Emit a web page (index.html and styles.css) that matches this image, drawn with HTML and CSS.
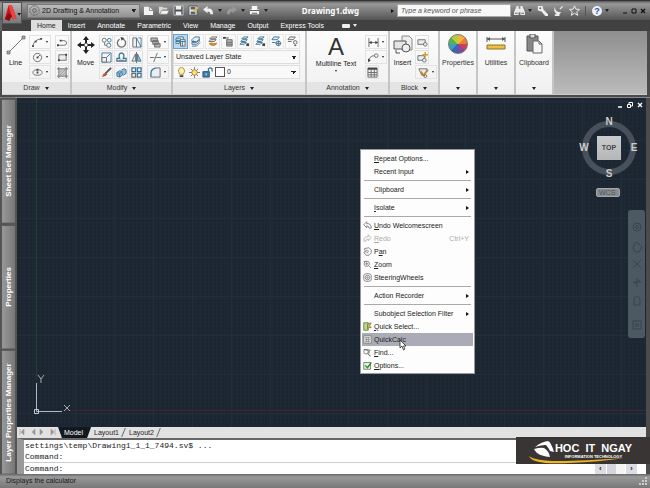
FILE: index.html
```html
<!DOCTYPE html>
<html lang="en">
<head>
<meta charset="utf-8">
<title>Drawing1.dwg</title>
<link rel="stylesheet" href="styles.css">
</head>
<body>
<svg class="sprite" aria-hidden="true">
  <defs>
    <symbol id="arc" viewBox="0 0 12 12"><path d="M1 10Q2 3 10 2" class="s"/><path d="M0 9h2v2H0zM9 1h2v2H9zM3 4h2v2H3z" class="k"/></symbol>
    <symbol id="circle" viewBox="0 0 12 12"><circle cx="6" cy="6" r="4.5" class="s"/><path d="M6 6l3-3" class="s"/><path d="M5 5h2v2H5z" class="k"/></symbol>
    <symbol id="ellipse" viewBox="0 0 12 12"><ellipse cx="6" cy="6" rx="5" ry="3" class="s"/><path d="M5 5h2v2H5zM5 2h2v2H5z" class="k"/></symbol>
    <symbol id="pline" viewBox="0 0 12 12"><path d="M1 9h6.500a3 2.500 0 0 0 0-5H4" class="s"/><path d="M0 8h2v2H0zM3 3h2v2H3z" class="k"/></symbol>
    <symbol id="rect" viewBox="0 0 12 12"><path d="M2 3h8v6H2z" class="s f"/><path d="M1 8h2v2H1zM9 2h2v2H9z" class="k"/></symbol>
    <symbol id="hatch" viewBox="0 0 12 12"><path d="M2 2h8v8H2z" fill="#ccc"/><path d="M2 0v12M10 0v12M0 2h12M0 10h12" class="s"/><path d="M3 9l6-6M3 6l3-3M6 9l3-3" stroke="#999"/></symbol>
    <symbol id="copy" viewBox="0 0 12 12"><circle cx="3.500" cy="3.500" r="2.200" class="s"/><circle cx="9" cy="3.500" r="2" class="b"/><circle cx="8.500" cy="9" r="2.300" class="b"/><path d="M4 6v3h2" class="s"/></symbol>
    <symbol id="rotate" viewBox="0 0 12 12"><path d="M4 2.500A4.500 4.500 0 1 0 8 2.500L6 1" class="s w"/><path d="M5 0l4 1-3 3z" class="k"/></symbol>
    <symbol id="stretch" viewBox="0 0 12 12"><path d="M2 1v10h4V1z" class="s f"/><path d="M6 1l5 10H6" class="b"/><path d="M8 1h3v10" class="b"/></symbol>
    <symbol id="scale" viewBox="0 0 12 12"><path d="M1 1h10v10H1z" class="b"/><path d="M1 6h5v5H1z" class="s f"/><path d="M6 6l4-4" class="b"/></symbol>
    <symbol id="offset" viewBox="0 0 12 12"><path d="M1 10V7h3q-2-5 2-6 4 1 2 6h3v3z" class="b w"/><path d="M3 9h6" class="s"/></symbol>
    <symbol id="mirror" viewBox="0 0 12 12"><path d="M5 2v8H1z" class="s f"/><path d="M7 2v8h4z" class="b bf"/><path d="M6 0v12" class="s"/></symbol>
    <symbol id="brush" viewBox="0 0 12 12"><path d="M11 1L5 7" stroke="#555" stroke-width="2"/><path d="M1 11q1-4 4-5l2 2q-2 3-6 3z" fill="#c3552d"/></symbol>
    <symbol id="explode" viewBox="0 0 12 12"><path d="M1 6l3-2 3 1v4l-3 2-3-1z" class="b bf"/><path d="M6 3l3-1 2 1v4l-3 2" class="b bf"/><path d="M1 6l3 1 3-2M4 7v4" class="b"/></symbol>
    <symbol id="array" viewBox="0 0 12 12"><path d="M1 1h4v4H1zM7 1h4v4H7zM7 7h4v4H7z" class="b w"/><path d="M1 7h4v4H1z" class="s w"/></symbol>
    <symbol id="erase" viewBox="0 0 12 12"><path d="M1 1h7v4H1zM3 4h6v4H3zM5 7h6v4H5z" class="s g"/></symbol>
    <symbol id="trim" viewBox="0 0 12 12"><path d="M0 6h5" class="s"/><path d="M7 6h5" class="b"/><path d="M8 1L4 11" class="s"/></symbol>
    <symbol id="fillet" viewBox="0 0 12 12"><path d="M1 11V7q0-5 6-6h4v10z" class="f"/><path d="M1 11V7q0-5 6-6" class="b w"/><path d="M7 1h4v10H1" class="s"/></symbol>
    <symbol id="layers" viewBox="0 0 12 12"><path d="M1 4l3-3h5v3L6 6H1zM1 7l2-2M1 7h5l3-3v2L6 9H1z" class="b f"/><path d="M1 11h5l4-4" class="b"/></symbol>
    <symbol id="layerprop" viewBox="0 0 12 12"><path d="M1 3l2-2h6v3M1 3h5v2H1zM1 6h4v2H1z" class="b f"/><path d="M6 4h5v7H6z" class="s f"/><path d="M6 6h5M8 6v5" class="b"/></symbol>
    <symbol id="layerhand" viewBox="0 0 12 12"><path d="M3 3l2-2h6L9 3zM2 6l2-2h6L8 6z" class="s f"/><path d="M2 8q3-2 5 0l4-1q0 3-4 4-4 0-5-3z" fill="#c98a3b"/></symbol>
    <symbol id="layerprev" viewBox="0 0 12 12"><path d="M4 4h6v7H4z" class="s g"/><path d="M1 2h5L4 4M4 7h6M4 9h6" class="s"/><path d="M0 1h3v2H0z" class="k"/></symbol>
    <symbol id="layertick" viewBox="0 0 12 12"><path d="M3 3l2-2h5L8 3zM2 6l2-2h5L7 6zM1 9l2-2h5L6 9z" class="b f"/><path d="M8 8h3v3H8z" class="k"/></symbol>
    <symbol id="layerfrz" viewBox="0 0 12 12"><path d="M1 4l2-3h6L7 4zM1 7h4" class="b f"/><circle cx="8" cy="8" r="2.500" class="b f"/><path d="M8 5v6M5 8h6" class="b"/></symbol>
    <symbol id="layeroff" viewBox="0 0 12 12"><path d="M1 4l2-3h6L7 4zM1 6h4" class="s f"/><circle cx="9" cy="7" r="2" class="s f"/><path d="M8 10h2v1H8z" class="k"/></symbol>
    <symbol id="bulb" viewBox="0 0 12 12"><path d="M4 8Q1 4 4 1q2-1 4 0 3 3 0 7z" fill="#fff09a" stroke="#a3935a"/><path d="M4 9h4v2H4z" class="k"/></symbol>
    <symbol id="sun" viewBox="0 0 12 12"><path d="M6 0v12M0 6h12M2 2l8 8M10 2l-8 8" stroke="#777"/><circle cx="6" cy="6" r="3" fill="#ffe372" stroke="#9a843e"/></symbol>
    <symbol id="lock" viewBox="0 0 12 12"><path d="M1 5h7v6H1z" fill="#3f7fab" stroke="#24587d"/><path d="M7 5V2q2-2 4 0v3" class="b w"/><path d="M4 7h1v2H4z" fill="#fff"/></symbol>
    <symbol id="dim" viewBox="0 0 12 12"><path d="M1 1v10M11 1v10M1 6h10" class="s"/><path d="M1 6l3-2v4zM11 6L8 4v4z" class="k"/></symbol>
    <symbol id="leader" viewBox="0 0 12 12"><path d="M1 11q0-7 6-7" class="s"/><circle cx="9" cy="4" r="2" class="s"/><path d="M0 11l0-4 3 2z" class="k"/></symbol>
    <symbol id="table" viewBox="0 0 12 12"><path d="M1 1h10v10H1z" class="s f"/><path d="M1 1h10v2H1z" class="k"/><path d="M1 6h10M1 8.500h10M4.500 3v8M8 3v8" class="s"/></symbol>
    <symbol id="blk1" viewBox="0 0 12 12"><path d="M1 3h8v5H1z" class="s f"/><circle cx="9" cy="8" r="2" class="s f"/></symbol>
    <symbol id="blk2" viewBox="0 0 12 12"><path d="M1 4h7v5H1z" class="s f"/><circle cx="8" cy="9" r="2" class="s f"/><path d="M9 0v6M6 3h6" stroke="#d99c27" stroke-width="1.500"/></symbol>
    <symbol id="blk3" viewBox="0 0 12 12"><path d="M1 2h9L7 9H4z" class="s f"/><path d="M3 5l3 4 5-6" stroke="#c08a28" stroke-width="2" fill="none"/><circle cx="8" cy="10" r="1.500" class="s"/></symbol>
    <symbol id="new" viewBox="0 0 12 12"><path d="M1 2h6l4 4v5H1z" fill="#f3f3f3"/><path d="M7 2v4h4" fill="none" stroke="#888"/></symbol>
    <symbol id="open" viewBox="0 0 12 12"><path d="M1 10V2h4l1 1h4v2H5z" fill="#d8d8d8"/><path d="M4 6h8l-2 4H2z" fill="#f4f4f4" stroke="#777" stroke-width=".5"/></symbol>
    <symbol id="save" viewBox="0 0 12 12"><path d="M1 1h10v10H1z" fill="#48535f" stroke="#c7c7c7"/><path d="M3 1h6v4H3zM3 7h6v4H3z" fill="#eee"/></symbol>
    <symbol id="saveas" viewBox="0 0 12 12"><path d="M1 1h9v10H1z" fill="#e5e5e5" stroke="#555"/><path d="M3 2h5v3H3zM3 7h5v3H3z" fill="#59626b"/><path d="M5 7l5-5 2 1-5 5z" fill="#e3b54f"/></symbol>
    <symbol id="undo" viewBox="0 0 12 12"><path d="M0 5l5-4v3q6-1 6 6H8q0-3-3-3v2z" fill="currentColor"/></symbol>
    <symbol id="back" viewBox="0 0 12 12"><path d="M1 5l4-4v2.500q6-.5 6 6H8q0-3-3-3V9z" fill="none" stroke="currentColor"/></symbol>
    <symbol id="print" viewBox="0 0 12 12"><path d="M3 1h6v4h2v5H1V5h2z" fill="#f5f5f5"/><path d="M1 6h10M3 9h6" stroke="#555"/></symbol>
    <symbol id="binoc" viewBox="0 0 12 12"><path d="M3 1h2v3h2V1h2l3 7v3H7V8H5v3H0V8z" fill="#ececec"/><path d="M1 9h3M8 9h3" stroke="#555"/></symbol>
    <symbol id="key" viewBox="0 0 12 12"><path d="M1 1h5l1 4 5 5v2H9L5 7 1 6z" fill="#eee"/><circle cx="3.500" cy="3.500" r="1" fill="#666"/></symbol>
    <symbol id="dish" viewBox="0 0 12 12"><path d="M2 2q0 6 7 6l-2 2v2H2v-2h2Q0 7 2 2zM7 4l3-3 1 1-3 3z" fill="#eee"/></symbol>
    <symbol id="star" viewBox="0 0 12 12"><path d="M6 1l1.500 3.500 4 .3-3 2.500 1 4L6 9l-3.500 2.300 1-4-3-2.500 4-.3z" fill="#777" stroke="#f3f3f3"/></symbol>
    <symbol id="gear" viewBox="0 0 12 12"><path d="M4 1h4l3 3v4l-3 3H4L1 8V4z" fill="none" stroke="#555" stroke-dasharray="2 1"/><circle cx="6" cy="6" r="2" fill="none" stroke="#555"/></symbol>
    <symbol id="pan" viewBox="0 0 12 12"><path d="M2 2l6-1 3 3v4l-3 3H4L1 7l2-1zM4 4l4 2M3 6l4 2" class="s"/></symbol>
    <symbol id="zoom" viewBox="0 0 12 12"><circle cx="5" cy="5" r="3.500" class="s"/><path d="M8 8l3 3M1 2h4M3 5h4M5 3v4" class="s"/></symbol>
    <symbol id="wheel" viewBox="0 0 12 12"><rect x="1" y="1" width="10" height="10" rx="3" class="s"/><circle cx="6" cy="6" r="3" class="s"/><circle cx="6" cy="6" r="1" class="s"/></symbol>
    <symbol id="qsel" viewBox="0 0 12 12"><path d="M1 1h6v10H1z" fill="#bcd98a" stroke="#4d6f35"/><path d="M6 3l5-2-2 4 2 3-3-1-2 2z" fill="#d8b648" stroke="#57503a" stroke-width=".7"/></symbol>
    <symbol id="calc" viewBox="0 0 12 12"><path d="M1 1h10v10H1z" fill="#e6e6e6" stroke="#777"/><path d="M3 3.500h6M3 6h6M3 8.500h6M4.500 3v7M7.500 3v7" stroke="#888"/></symbol>
    <symbol id="find" viewBox="0 0 12 12"><circle cx="4" cy="5" r="3" class="s"/><path d="M1 2l9 1M6 7l4 4M8 4v3" class="s w"/></symbol>
    <symbol id="opts" viewBox="0 0 12 12"><path d="M1 2h9v9H1z" fill="#e8f3e4" stroke="#49734a"/><path d="M3 6l3 3 5-7" fill="none" stroke="#2f8a36" stroke-width="1.800"/></symbol>
  </defs>
</svg>

<div class="app">
  <header class="titlebar">
    <button class="appmenu" aria-label="Application menu">
      <svg viewBox="0 0 20 22"><path d="M2 18L6 3q2-2 4 0l5 14-4 1-2-3-4 2z" fill="#c8161d"/><path d="M6 3q2-2 4 0l5 14-4 1z" fill="#ee4440"/><path d="M2 18l4-7 4 3-3 6z" fill="#8e0b12"/><path d="M16 11h4l-2 3z" fill="#111"/></svg>
    </button>
    <div class="workspace">
      <svg class="ic"><use href="#gear"/></svg>
      <select aria-label="Workspace"><option>2D Drafting &amp; Annotation</option></select>
    </div>
    <div class="quick">
      <button aria-label="New"><svg class="ic"><use href="#new"/></svg></button>
      <button aria-label="Open"><svg class="ic"><use href="#open"/></svg></button>
      <button aria-label="Save"><svg class="ic"><use href="#save"/></svg></button>
      <button aria-label="Save as"><svg class="ic"><use href="#saveas"/></svg></button>
      <button class="split" aria-label="Undo"><svg class="ic"><use href="#undo"/></svg><i class="caret"></i></button>
      <button class="split faded" aria-label="Redo"><svg class="ic flip"><use href="#undo"/></svg><i class="caret"></i></button>
      <button aria-label="Print"><svg class="ic"><use href="#print"/></svg></button>
      <button class="more" aria-label="Customize"><i class="caret"></i></button>
    </div>
    <h1>Drawing1.dwg</h1>
    <div class="search">
      <i class="play"></i>
      <input type="search" aria-label="Search" placeholder="Type a keyword or phrase">
    </div>
    <div class="help">
      <button class="split" aria-label="Find"><svg class="ic"><use href="#binoc"/></svg><i class="caret"></i></button>
      <button aria-label="Subscription"><svg class="ic"><use href="#key"/></svg></button>
      <button aria-label="Communication"><svg class="ic"><use href="#dish"/></svg></button>
      <button aria-label="Favorites"><svg class="ic"><use href="#star"/></svg></button>
      <button class="question" aria-label="Help"><b>?</b><i class="caret"></i></button>
    </div>
    <div class="window">
      <button aria-label="Minimize"><svg viewBox="0 0 6 6"><path d="M1 5h4" stroke="#111"/></svg></button>
      <button aria-label="Restore"><svg viewBox="0 0 6 6"><path d="M1 1h4v4H1z" fill="none" stroke="#111"/></svg></button>
      <button aria-label="Close"><svg viewBox="0 0 6 6"><path d="M1 1l4 4M5 1L1 5" stroke="#111" stroke-width="1.300"/></svg></button>
    </div>
  </header>

  <nav class="tabs">
    <a href="#" class="on">Home</a><a href="#">Insert</a><a href="#">Annotate</a><a href="#">Parametric</a><a href="#">View</a><a href="#">Manage</a><a href="#">Output</a><a href="#">Express Tools</a>
    <button aria-label="Minimize ribbon"><span></span><i class="caret"></i></button>
  </nav>

  <section class="ribbon">
    <div class="panel draw">
      <div class="tools">
        <button class="big"><svg viewBox="0 0 20 20"><path d="M2 18L18 2" stroke="#777"/><path d="M1 16h3v3H1zM16 1h3v3h-3z" fill="#aaa" stroke="#555" stroke-width=".6"/></svg>Line</button>
        <div class="grid two">
          <button class="split"><svg class="ic"><use href="#arc"/></svg><i class="caret"></i></button><button><svg class="ic"><use href="#pline"/></svg></button>
          <button class="split"><svg class="ic"><use href="#circle"/></svg><i class="caret"></i></button><button><svg class="ic"><use href="#rect"/></svg></button>
          <button class="split"><svg class="ic"><use href="#ellipse"/></svg><i class="caret"></i></button><button><svg class="ic"><use href="#hatch"/></svg></button>
        </div>
      </div>
      <h2>Draw <i class="caret"></i></h2>
    </div>
    <div class="panel modify">
      <div class="tools">
        <button class="big"><svg viewBox="0 0 20 20"><path d="M10 1l3 4h-2v3H9V5H7zM10 19l3-4h-2v-3H9v3H7zM1 10l4-3v2h3v2H5v2zM19 10l-4-3v2h-3v2h3v2z" fill="#222"/><path d="M8.500 8.500h3v3h-3z" fill="#fff" stroke="#777"/></svg>Move</button>
        <div class="grid four">
          <button><svg class="ic"><use href="#copy"/></svg></button><button><svg class="ic"><use href="#rotate"/></svg></button><button><svg class="ic"><use href="#stretch"/></svg></button><button class="split"><svg class="ic"><use href="#erase"/></svg><i class="caret"></i></button>
          <button><svg class="ic"><use href="#scale"/></svg></button><button><svg class="ic"><use href="#offset"/></svg></button><button><svg class="ic"><use href="#mirror"/></svg></button><button class="split"><svg class="ic"><use href="#trim"/></svg><i class="caret"></i></button>
          <button><svg class="ic"><use href="#brush"/></svg></button><button><svg class="ic"><use href="#explode"/></svg></button><button><svg class="ic"><use href="#array"/></svg></button><button class="split"><svg class="ic"><use href="#fillet"/></svg><i class="caret"></i></button>
        </div>
      </div>
      <h2>Modify <i class="caret"></i></h2>
    </div>
    <div class="panel layers">
      <div class="tools stack">
        <div class="row">
          <button class="active"><svg class="ic"><use href="#layerprop"/></svg></button><button><svg class="ic"><use href="#layers"/></svg></button>
          <button><svg class="ic"><use href="#layerhand"/></svg></button><button><svg class="ic"><use href="#layerprev"/></svg></button>
          <button><svg class="ic"><use href="#layertick"/></svg></button><button><svg class="ic"><use href="#layertick"/></svg></button>
          <button><svg class="ic"><use href="#layerfrz"/></svg></button><button><svg class="ic"><use href="#layeroff"/></svg></button>
        </div>
        <div class="combo"><select aria-label="Layer state"><option>Unsaved Layer State</option></select></div>
        <div class="combo">
          <svg class="ic"><use href="#bulb"/></svg><svg class="ic"><use href="#sun"/></svg><svg class="ic"><use href="#lock"/></svg><i class="swatch"></i>
          <select aria-label="Layer"><option>0</option></select>
        </div>
      </div>
      <h2>Layers <i class="caret"></i></h2>
    </div>
    <div class="panel annotation">
      <div class="tools">
        <button class="big text"><span class="glyph">A</span>Multiline Text<i class="caret"></i></button>
        <div class="grid">
          <button class="split"><svg class="ic"><use href="#dim"/></svg><i class="caret"></i></button>
          <button class="split"><svg class="ic"><use href="#leader"/></svg><i class="caret"></i></button>
          <button><svg class="ic"><use href="#table"/></svg></button>
        </div>
      </div>
      <h2>Annotation <i class="caret"></i></h2>
    </div>
    <div class="panel block">
      <div class="tools">
        <button class="big"><svg viewBox="0 0 20 20"><path d="M9 1h7l3 3v11H9z" fill="#eee" stroke="#888"/><path d="M1 6h12v8H1z" fill="#e4e4e4" stroke="#555"/><circle cx="13" cy="13" r="4" fill="#eee" stroke="#555"/><path d="M3 15v3h4" fill="none" stroke="#555"/></svg>Insert</button>
        <div class="grid">
          <button><svg class="ic"><use href="#blk1"/></svg></button>
          <button><svg class="ic"><use href="#blk2"/></svg></button>
          <button class="split"><svg class="ic"><use href="#blk3"/></svg><i class="caret"></i></button>
        </div>
      </div>
      <h2>Block <i class="caret"></i></h2>
    </div>
    <button class="panel tall">
      <i class="colorwheel"></i>Properties<i class="caret"></i>
    </button>
    <button class="panel tall">
      <svg viewBox="0 0 20 20"><path d="M1 5h18M1 3v5M19 3v5" stroke="#555"/><path d="M1 5l3-2v4zM19 5l-3-2v4z" fill="#555"/><path d="M1 11h18v4H1z" fill="#f0bd42" stroke="#8d742f"/></svg>Utilities<i class="caret"></i>
    </button>
    <button class="panel tall">
      <svg viewBox="0 0 20 20"><path d="M3 2h11v15H3z" fill="#888" stroke="#555"/><path d="M6 0h5v4H6z" fill="#ddd" stroke="#555"/><path d="M9 7h6l3 3v9H9z" fill="#f7f7f7" stroke="#666"/><path d="M15 7v3h3" fill="none" stroke="#666"/></svg>Clipboard<i class="caret"></i>
    </button>
  </section>

  <main class="work">
    <aside class="rail">
      <button>Sheet Set Manager</button>
      <button>Properties</button>
      <button>Layer Properties Manager</button>
    </aside>
    <div class="document">
      <div class="canvas">
        <div class="axis-x"></div><div class="axis-y"></div>
        <svg class="ucs" viewBox="0 0 40 42"><path d="M3.500 9v28.500H29" fill="none" stroke="#aeb9c3"/><path d="M1.500 35.500h4v4h-4z" fill="none" stroke="#c5ced6"/><path d="M5 1l3 4 3-4M8 5v4M31 31l6 6M37 31l-6 6" fill="none" stroke="#a0abb5"/></svg>
        <div class="docwin">
          <button aria-label="Minimize drawing"><svg viewBox="0 0 6 6"><path d="M1 5h4" stroke="#fff" stroke-width="1.500"/></svg></button>
          <button aria-label="Restore drawing"><svg viewBox="0 0 6 6"><path d="M.5 2.500h3v3h-3zM2 2V.5h3.500V4H4" fill="none" stroke="#fff"/></svg></button>
          <button aria-label="Close drawing"><svg viewBox="0 0 6 6"><path d="M1 1l4 4M5 1L1 5" stroke="#fff" stroke-width="1.300"/></svg></button>
        </div>
        <div class="cube">
          <span class="north">N</span><span class="west">W</span><button>TOP</button><span class="east">E</span><span class="south">S</span>
        </div>
        <button class="wcs">WCS</button>
        <div class="navbar">
          <svg viewBox="0 0 14 128"><g fill="none" stroke="#38444d"><circle cx="7" cy="17" r="4"/><circle cx="7" cy="17" r="1.500"/><path d="M3 38q1-5 3-6l3 2 3 3-3 5H5zM3 50l8 8M11 50l-8 8M3 72h8M7 68v9M4 74l6-4M4 89q3-6 6 0v6H4zM3 111h8v8H3zM6 113l3 2-3 2z"/></g></svg>
        </div>

        <div class="menu" role="menu">
          <button role="menuitem"><span><u>R</u>epeat Options...</span></button>
          <button role="menuitem"><span>Recent Input</span><i class="play"></i></button>
          <hr>
          <button role="menuitem"><span>Clipboard</span><i class="play"></i></button>
          <hr>
          <button role="menuitem"><span><u>I</u>solate</span><i class="play"></i></button>
          <hr>
          <button role="menuitem"><svg class="ic"><use href="#back"/></svg><span><u>U</u>ndo Welcomescreen</span></button>
          <button role="menuitem" disabled><svg class="ic flip"><use href="#back"/></svg><span><u>R</u>edo</span><kbd>Ctrl+Y</kbd></button>
          <button role="menuitem"><svg class="ic"><use href="#pan"/></svg><span>P<u>a</u>n</span></button>
          <button role="menuitem"><svg class="ic"><use href="#zoom"/></svg><span><u>Z</u>oom</span></button>
          <button role="menuitem"><svg class="ic"><use href="#wheel"/></svg><span>SteeringWheels</span></button>
          <hr>
          <button role="menuitem"><span>Action Recorder</span><i class="play"></i></button>
          <hr>
          <button role="menuitem"><span>Subobject Selection Filter</span><i class="play"></i></button>
          <button role="menuitem"><svg class="ic"><use href="#qsel"/></svg><span><u>Q</u>uick Select...</span></button>
          <button role="menuitem" class="hot"><svg class="ic"><use href="#calc"/></svg><span>QuickCalc</span></button>
          <button role="menuitem"><svg class="ic"><use href="#find"/></svg><span><u>F</u>ind...</span></button>
          <button role="menuitem"><svg class="ic"><use href="#opts"/></svg><span><u>O</u>ptions...</span></button>
          <svg class="pointer" viewBox="0 0 8 12"><path d="M1 1v8l2-2 1.500 4 1.500-1-1.500-3H7z" fill="#fff" stroke="#222" stroke-width=".8"/></svg>
        </div>
      </div>

      <div class="sheets">
        <svg class="pager" viewBox="0 0 40 8"><path d="M7 1L4 4l3 3zM3 1v6M18 1l-3 3 3 3zM23 1l3 3-3 3zM34 1l3 3-3 3zM38 1v6" fill="#999" stroke="#999" stroke-width=".6"/></svg>
        <a href="#" class="on">Model</a><a href="#">Layout1</a><a href="#">Layout2</a>
      </div>

      <div class="command">
        <div class="log">settings\temp\Drawing1_1_1_7494.sv$ ...<br>Command:</div>
        <div class="prompt">
          <label for="cmd">Command:</label><input id="cmd" type="text">
          <div class="scroll"><button aria-label="Scroll left">‹</button><i></i><button aria-label="Scroll right">›</button></div>
        </div>
      </div>
    </div>
  </main>

  <footer class="status">Displays the calculator
    <svg viewBox="0 0 8 8"><path d="M6 0h2v2H6zM3 3h2v2H3zM6 3h2v2H6zM0 6h2v2H0zM3 6h2v2H3zM6 6h2v2H6z" fill="#ccc"/></svg>
  </footer>

  <div class="brand">
    <svg viewBox="0 0 110 26"><path d="M6 8q6-5 13-6 3 1 6 11l-4-1q-2-4-4-6-5 0-11 2z" fill="#fff"/><path d="M5 10q7-2 10-1 5 3 6 9-9-1-13-4-2-2-3-4z" fill="#fff"/><path d="M15 6l8 10" stroke="#383534"/><path d="M0 17q3 9 40 7 30-1 55-5-40 3-65 3Q6 22 0 17z" fill="#f0b51e"/></svg>
    <div class="name"><strong>HOC&nbsp; IT&nbsp; NGAY</strong><small>INFORMATION TECHNOLOGY</small></div>
  </div>
</div>
</body>
</html>
```
FILE: styles.css
```css
* { box-sizing: border-box; }
body { margin: 0; background: #4b4b4b; font: 7px/10px "Liberation Sans", sans-serif; color: #222; }
button, select, input { font: inherit; color: inherit; border: 0; padding: 0; margin: 0; background: none; border-radius: 0; }
button { display: flex; align-items: center; justify-content: center; }
a { color: inherit; text-decoration: none; }
h1, h2 { margin: 0; font: inherit; }
select { appearance: none; }
.sprite { position: absolute; width: 0; height: 0; }
.ic { width: 11px; height: 11px; flex: none; }
.flip { transform: scaleX(-1); }
.s { fill: none; stroke: #6a6a6a; }
.b { fill: none; stroke: #3b7396; }
.f { fill: #e9eef2; }
.g { fill: #b5b5b5; }
.bf { fill: #93bfdc; }
.k { fill: #444; }
.w { stroke-width: 1.4; }
.caret { width: 0; height: 0; border: 2px solid transparent; border-top: 3px solid #222; border-bottom: 0; }
.play { width: 0; height: 0; border: 2px solid transparent; border-left: 3px solid #111; border-right: 0; }

.app { position: relative; display: flex; flex-direction: column; min-height: 100vh; }

.titlebar { display: flex; align-items: center; height: 20px; background: linear-gradient(#5a5a5a, #999 15%, #747474 60%, #555); border-top: 1px solid #333; }
.appmenu { align-self: flex-start; position: relative; z-index: 2; width: 20px; height: 22px; margin: 1px 5px 0 2px; background: linear-gradient(#bbb, #777); border: 1px solid #555; }
.appmenu svg { width: 18px; height: 20px; }
.workspace { display: flex; align-items: center; gap: 2px; width: 113px; height: 14px; padding-left: 1px; border: 1px solid #777; background: linear-gradient(#bbb, #929292); color: #111; }
.workspace select { flex: 1; }
.workspace select, .combo select { background: linear-gradient(45deg, transparent 50%, #222 50%) no-repeat right 5px center / 3px 3px, linear-gradient(-45deg, transparent 50%, #222 50%) no-repeat right 2px center / 3px 3px; }
.quick, .help { display: flex; align-items: center; }
.quick button { width: 15px; }
.quick { margin-left: 1px; color: #eee; }
.quick .split { width: 23px; gap: 4px; }
.quick .faded { color: #999; }
.quick .more { width: 8px; }
h1 { flex: 1; text-align: center; font: bold 8px/10px "Noto Sans", sans-serif; color: #fff; }
.search { display: flex; align-items: center; gap: 3px; }
.search input { width: 114px; height: 13px; padding: 0 3px; background: #f8f8f8; border: 1px solid #aaa; font-style: italic; }
.search input::placeholder { color: #555; opacity: 1; }
.help { gap: 5px; margin-left: 3px; }
.help .split, .question { gap: 3px; }
.help .question b { width: 10px; height: 10px; border-radius: 5px; background: #eef; color: #25579a; font-size: 9px; }
.question { padding-left: 6px; border-left: 1px solid #555; }
.window { display: flex; gap: 2px; margin: 0 4px 0 12px; }
.window svg, .docwin svg { width: 6px; height: 6px; }
.window button { width: 7px; }

.tabs { display: flex; align-items: stretch; height: 11px; padding-left: 29px; background: #414141; color: #fff; line-height: 11px; border-left: 2px solid #666; }
.tabs a { padding: 0 6px; }
.tabs .on { background: #dedede; color: #222; }
.tabs button { gap: 3px; margin-left: 12px; }
.tabs button span { width: 8px; height: 4px; background: #eee; border-radius: 1px; }
.tabs button .caret { border-top-color: #eee; }

.ribbon { display: flex; height: 64px; margin: 0 3px 0 2px; background: linear-gradient(#8f8f8f, #bbb); border-bottom: 1px solid #ccc; }
.panel { display: flex; flex-direction: column; background: linear-gradient(#fcfcfc, #f0f0f0); border-right: 2px solid #c5c5c5; flex: none; }
.tools { display: flex; flex: 1; gap: 2px; padding: 4px 1px 0 2px; }
.panel h2 { display: flex; align-items: center; justify-content: center; gap: 5px; height: 12px; background: #e4e4e4; color: #333; }
.draw { width: 70px; }
.modify { width: 101px; }
.layers { width: 134px; }
.annotation { width: 83px; }
.block { width: 50px; }
.big { flex: 1; flex-direction: column; justify-content: flex-start; gap: 3px; }
.big svg { width: 20px; height: 20px; }
.big .caret { border-width: 2px 1px 0; }
.big.text { gap: 1px; }
.glyph { font: 24px/23px "Liberation Sans", sans-serif; color: #333; }
.grid { display: grid; gap: 1px; align-content: start; justify-items: start; }
.two { grid-template-columns: auto auto; column-gap: 4px; }
.four { grid-template-columns: 14px 14px 17px auto; padding-right: 1px; }
.grid button { width: 14px; height: 14px; border: 1px solid #e2e2e2; }
.grid .split { width: 22px; gap: 3px; }
.grid .split .caret { border-width: 2px 1px 0; }
.stack { flex-direction: column; gap: 1px; padding: 3px 5px 0 0; }
.row { display: flex; justify-content: space-between; }
.row button { width: 15px; height: 15px; border: 1px solid #e6e6e6; }
.row .active { background: #b9d8f2; border-color: #6fa0c8; }
.combo { display: flex; align-items: center; gap: 2px; height: 14px; padding-left: 2px; border: 1px solid #ddd; background: #f9f9f9; }
.combo select { flex: 1; height: 12px; }
.swatch { width: 10px; height: 10px; border: 1px solid #555; background: #fff; }
.tall { width: 38px; align-items: center; justify-content: flex-start; gap: 4px; padding-top: 3px; color: #333; }
.tall svg, .colorwheel { width: 20px; height: 20px; }
.tall .caret { margin: auto 0 4px; }
.colorwheel { border-radius: 50%; border: 1px solid #777; background: conic-gradient(#f2b63a 0 45deg, #ed7c34 0 90deg, #cf3e54 0 135deg, #7d4a9c 0 180deg, #3e62b5 0 225deg, #3d9fb8 0 270deg, #4eb455 0 315deg, #b9cc3f 0); }

.work { display: flex; flex: 1; margin-top: 2px; border-top: 1px solid #888; }
.rail { display: flex; flex-direction: column; gap: 1px; width: 17px; padding: 0 2px; background: #555; }
.rail button { flex: 1; writing-mode: vertical-rl; transform: rotate(180deg); background: linear-gradient(90deg, #777, #999); border-bottom: 2px solid #555; color: #fff; font: bold 8px/10px "Liberation Sans", sans-serif; }
.document { display: flex; flex-direction: column; flex: 1; min-width: 0; margin-right: 4px; }
.canvas { position: relative; flex: 1; overflow: hidden; background:
  linear-gradient(#222e3a 1px, transparent 1px) 19px 3px / 39px 39px,
  linear-gradient(90deg, #222e3a 1px, transparent 1px) 19px 3px / 39px 39px,
  linear-gradient(#1e2935 1px, transparent 1px) 0 0 / 4px 4px,
  linear-gradient(90deg, #1e2935 1px, transparent 1px) 3px 0 / 4px 4px, #1c2631; }
.axis-x { position: absolute; left: 45px; right: 0; bottom: 16px; height: 1px; background: #432632; }
.axis-y { position: absolute; left: 19px; top: 0; bottom: 50px; width: 1px; background: #21432f; }
.ucs { position: absolute; left: 16px; bottom: 11px; width: 40px; height: 42px; }
.docwin { position: absolute; right: 3px; top: 4px; display: flex; gap: 4px; }
.cube { position: absolute; right: 7px; top: 19px; width: 60px; height: 62px; display: grid; grid-template: 10px 1fr 10px / 10px 1fr 10px; place-items: center; color: #ccc; font: bold 10px/10px "Liberation Sans", sans-serif; }
.cube::before { content: ""; position: absolute; inset: 4px 3px; border: 6px solid #48515b; border-radius: 50%; }
.cube > * { position: relative; }
.north { grid-area: 1 / 2; }
.west { grid-area: 2 / 1; }
.east { grid-area: 2 / 3; }
.south { grid-area: 3 / 2; }
.cube button { grid-area: 2 / 2; width: 24px; height: 24px; background: linear-gradient(#c9cccd, #b4b7b8); color: #444; font-size: 7px; }
.wcs { position: absolute; right: 26px; top: 90px; width: 24px; height: 9px; border-radius: 2px; background: #888d92; border: 1px solid #a4a8ab; color: #555; justify-content: flex-start; padding-left: 2px; }
.navbar { position: absolute; right: 1px; top: 112px; width: 17px; height: 128px; border-radius: 3px; background: #4d5962; display: flex; justify-content: center; }
.navbar svg { width: 14px; }

.menu { position: absolute; left: 343px; top: 51px; width: 115px; padding: 2px 1px 1px; background: #fdfdfd; border: 1px solid #999; color: #222; }
.menu button { position: relative; width: 100%; height: 13px; padding: 0 4px 0 12px; justify-content: flex-start; }
.menu .ic { position: absolute; left: 1px; width: 9px; height: 9px; color: #666; }
.menu .play, .menu kbd { margin-left: auto; }
.menu kbd { font: inherit; }
.menu button:disabled, .menu button:disabled .ic { color: #aaa; }
.menu .hot { background: #a9acb6; }
.menu hr { margin: 2px; border: 0; border-top: 1px solid #aaa; }
.pointer { position: absolute; left: 38px; top: 189px; width: 8px; height: 12px; }

.sheets { display: flex; align-items: stretch; height: 11px; background: #e2e2e2; line-height: 11px; }
.pager { width: 40px; height: 8px; margin: 1px 1px 0 0; }
.sheets a { position: relative; padding: 0 7px 0 3px; }
.sheets a::after { content: ""; position: absolute; right: 2px; top: 1px; width: 1px; height: 9px; background: #666; transform: skewX(-22deg); }
.sheets .on { background: #101820; color: #fff; padding: 0 8px 0 6px; clip-path: polygon(0 0, 100% 0, calc(100% - 4px) 100%, 4px 100%); }
.sheets .on::after { display: none; }

.command { display: flex; flex-direction: column; border-top: 2px solid #666; border-left: 7px solid #999; background: #fff; font: 8px/11px "Liberation Mono", monospace; }
.log { padding: 0 1px; border-bottom: 1px solid #ccc; }
.prompt { display: flex; align-items: center; height: 11px; padding-left: 1px; }
.prompt input { flex: 1; min-width: 0; }
.scroll { display: flex; gap: 1px; margin-right: 9px; }
.scroll button { width: 11px; height: 10px; background: #dcdce4; font-weight: bold; }
.scroll i { width: 18px; background: linear-gradient(90deg, #d5d5dd 50%, #f4f4f4 0); }

.status { display: flex; align-items: center; justify-content: space-between; height: 14px; padding: 0 3px 0 6px; background: linear-gradient(#666, #999 20%, #777); color: #181818; }
.status svg { width: 8px; height: 8px; }
.brand { position: absolute; right: 0; bottom: 24px; width: 134px; height: 27px; background: #383534; color: #fff; }
.brand svg { position: absolute; left: 13px; top: 2px; width: 110px; height: 26px; }
.name { position: relative; display: flex; flex-direction: column; align-items: center; width: 77px; margin-left: 39px; padding-top: 5px; white-space: nowrap; }
.name strong { font: bold 11px/12px "Liberation Sans", sans-serif; }
.name small { font: bold 4px/5px "Liberation Sans", sans-serif; }
```
